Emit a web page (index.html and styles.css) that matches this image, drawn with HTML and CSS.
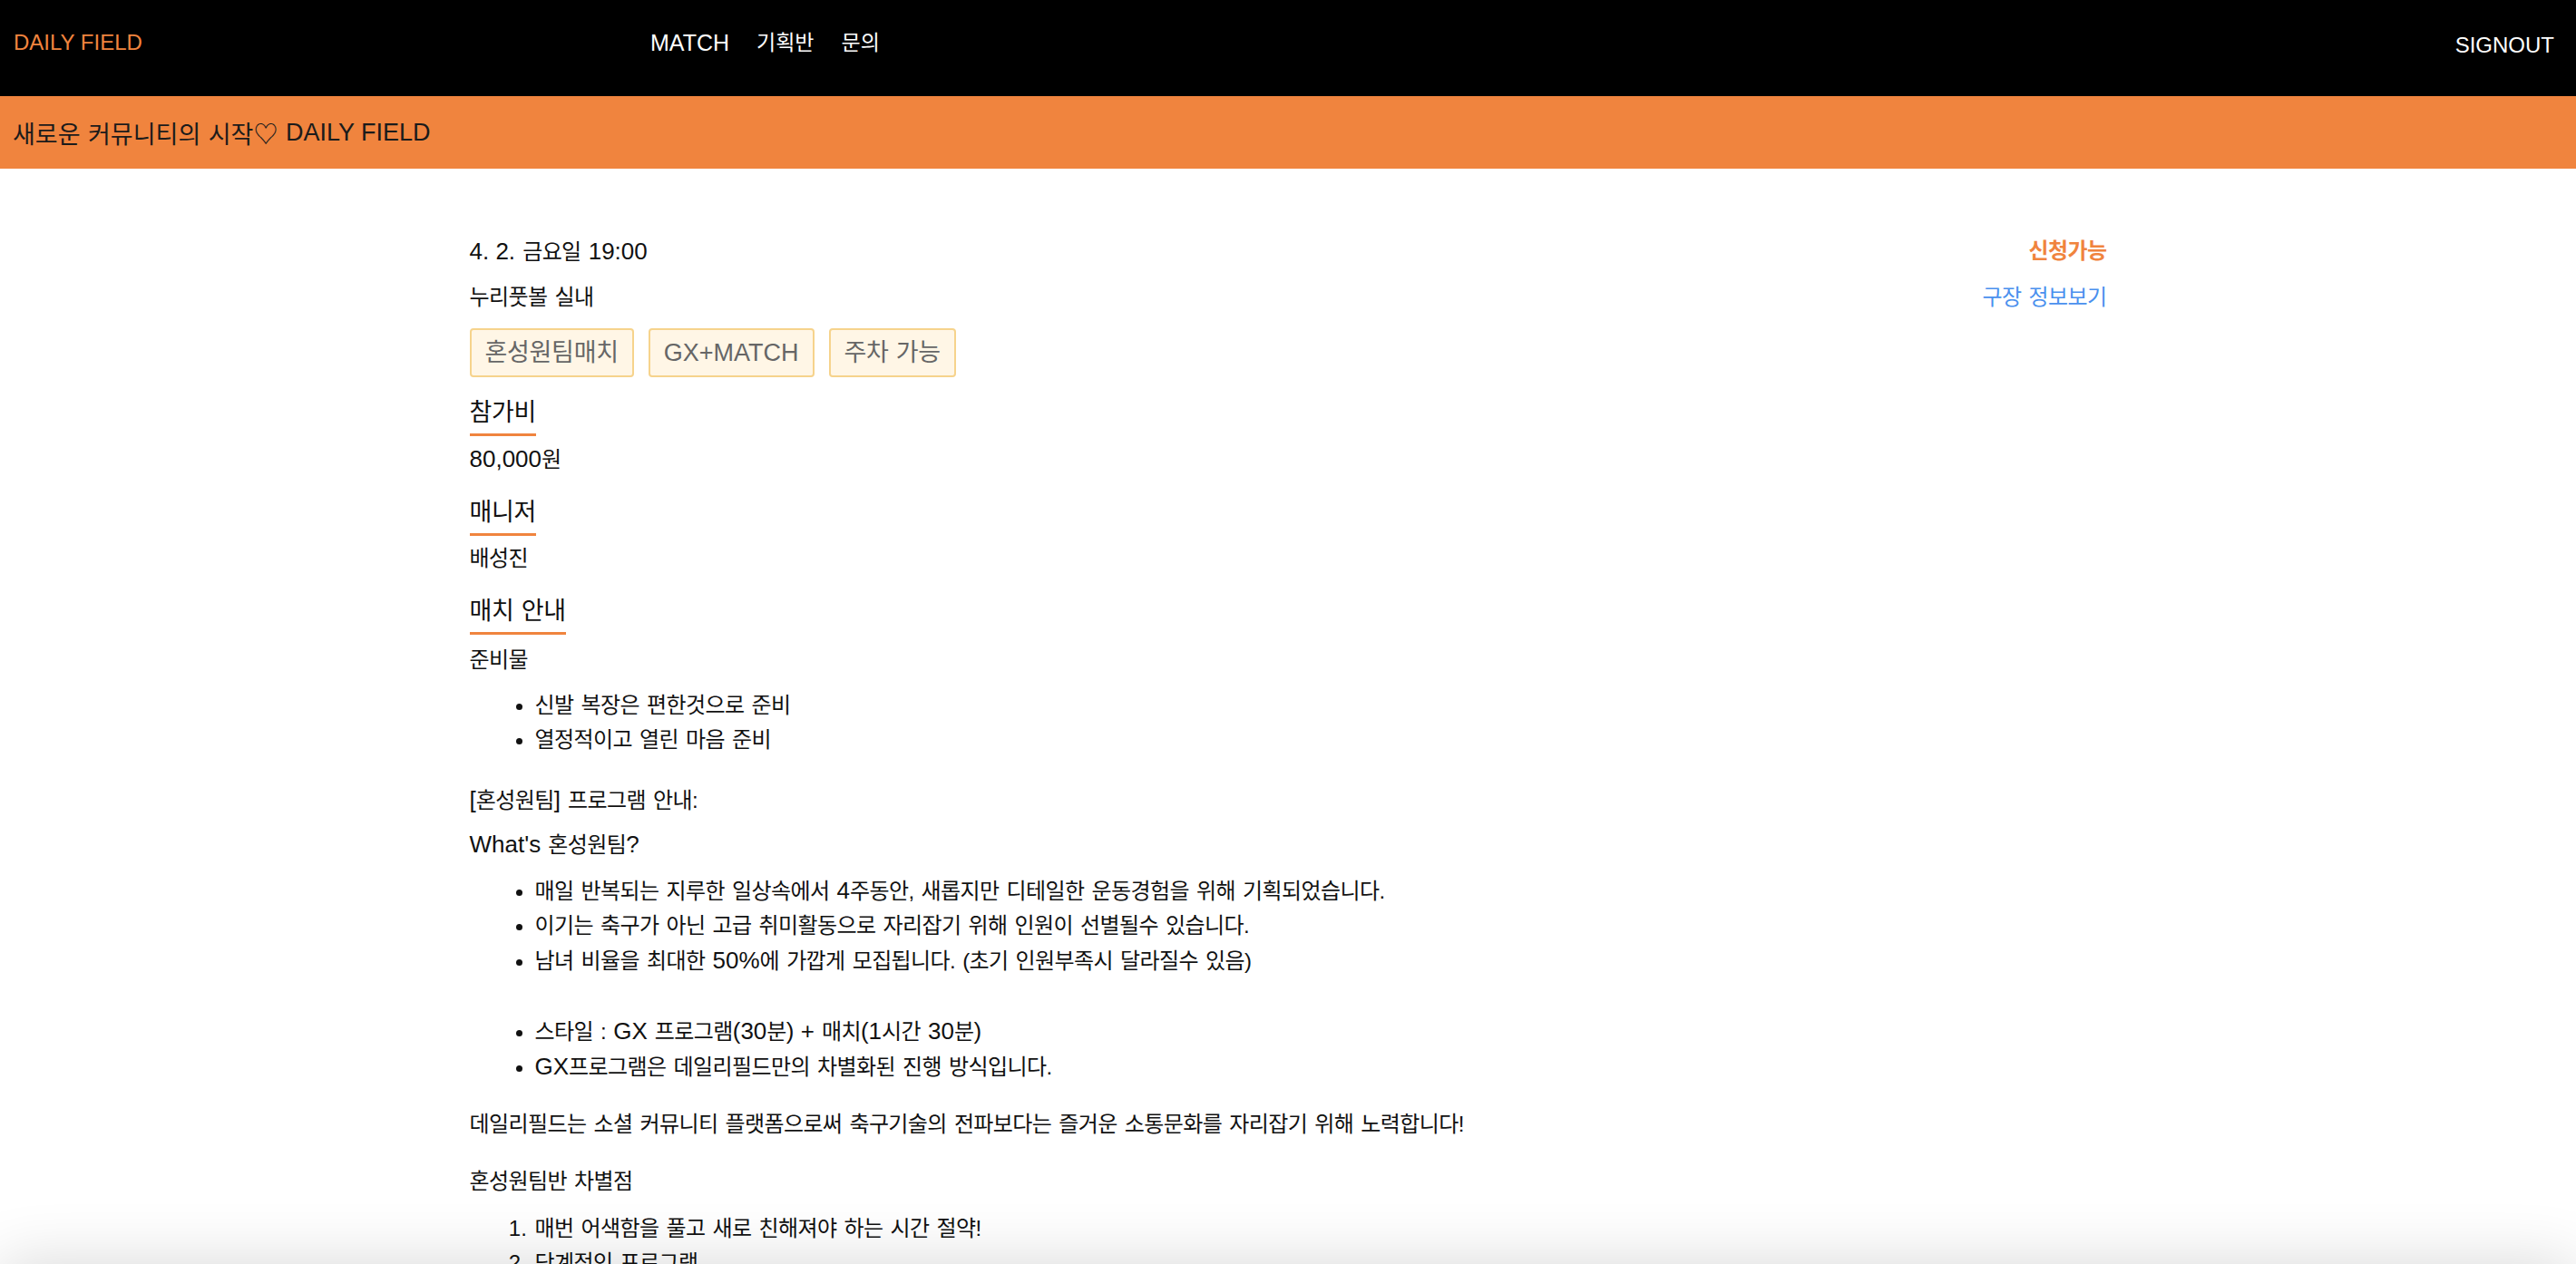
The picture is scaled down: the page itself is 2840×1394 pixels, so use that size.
FILE: index.html
```html
<!DOCTYPE html>
<html lang="ko">
<head>
<meta charset="utf-8">
<title>DAILY FIELD</title>
<link rel="stylesheet" href="styles.css">
</head>
<body>
<header class="topbar">
  <a class="logo" href="#">DAILY FIELD</a>
  <nav class="menu">
    <a class="latin" href="#">MATCH</a>
    <a href="#">기획반</a>
    <a href="#">문의</a>
  </nav>
  <a class="signout" href="#">SIGNOUT</a>
</header>
<div class="banner">새로운 커뮤니티의 시작♡ <span class="latin">DAILY FIELD</span></div>

<main class="detail">
  <div class="row">
    <span><span class="latin">4. 2.</span> 금요일 <span class="latin">19:00</span></span>
    <span class="status">신청가능</span>
  </div>
  <div class="row">
    <span>누리풋볼 실내</span>
    <a class="field-link" href="#">구장 정보보기</a>
  </div>
  <div class="tags">
    <span class="tag">혼성원팀매치</span>
    <span class="tag"><span class="latin">GX+MATCH</span></span>
    <span class="tag">주차 가능</span>
  </div>

  <h3 class="sec-title">참가비</h3>
  <p class="sec-value"><span class="latin">80,000</span>원</p>

  <h3 class="sec-title">매니저</h3>
  <p class="sec-value">배성진</p>

  <h3 class="sec-title">매치 안내</h3>
  <div class="guide">
    <p class="guide-label">준비물</p>
    <ul class="guide-list">
      <li>신발 복장은 편한것으로 준비</li>
      <li>열정적이고 열린 마음 준비</li>
    </ul>
    <p class="guide-head"><span class="latin">[</span>혼성원팀<span class="latin">]</span> 프로그램 안내:</p>
    <p class="guide-sub"><span class="latin">What's</span> 혼성원팀<span class="latin">?</span></p>
    <ul class="guide-list">
      <li>매일 반복되는 지루한 일상속에서 <span class="latin">4</span>주동안, 새롭지만 디테일한 운동경험을 위해 기획되었습니다.</li>
      <li>이기는 축구가 아닌 고급 취미활동으로 자리잡기 위해 인원이 선별될수 있습니다.</li>
      <li>남녀 비율을 최대한 <span class="latin">50%</span>에 가깝게 모집됩니다. (초기 인원부족시 달라질수 있음)</li>
      <li class="spacer"></li>
      <li>스타일 : <span class="latin">GX</span> 프로그램<span class="latin">(30</span>분<span class="latin">) +</span> 매치<span class="latin">(1</span>시간 <span class="latin">30</span>분<span class="latin">)</span></li>
      <li><span class="latin">GX</span>프로그램은 데일리필드만의 차별화된 진행 방식입니다.</li>
    </ul>
    <p class="guide-para">데일리필드는 소셜 커뮤니티 플랫폼으로써 축구기술의 전파보다는 즐거운 소통문화를 자리잡기 위해 노력합니다!</p>
    <p class="guide-para">혼성원팀반 차별점</p>
    <ol class="guide-list guide-ordered">
      <li>매번 어색함을 풀고 새로 친해져야 하는 시간 절약!</li>
      <li>단계적인 프로그램</li>
    </ol>
  </div>
</main>

<div class="dock"></div>
</body>
</html>
```

FILE: styles.css
```css
body {
  margin: 0;
  font-family: "Liberation Sans", "Noto Sans CJK KR", sans-serif;
  color: #111;
  background: #fff;
}

a {
  text-decoration: none;
}

/* top navigation */
.topbar {
  display: flex;
  align-items: flex-start;
  height: 106px;
  background: #000;
}

.logo {
  box-sizing: border-box;
  width: 717px;
  padding-left: 15px;
  margin-top: 33px;
  font-size: 24px;
  line-height: 28px;
  color: #f0843e;
}

.menu {
  display: flex;
  gap: 30px;
  margin-top: 33px;
}

.menu a {
  color: #fff;
  font-size: 23px;
  line-height: 28px;
}

.menu a.latin {
  font-size: 25px;
}

.signout {
  margin-left: auto;
  margin-right: 24px;
  margin-top: 36px;
  color: #fff;
  font-size: 24px;
  line-height: 28px;
}

/* banner */
.banner {
  display: flex;
  align-items: center;
  height: 80px;
  padding-left: 14px;
  background: #f0843e;
  color: #1b1b1b;
  font-size: 27px;
  word-spacing: 1px;
  white-space: pre;
}

.latin {
  letter-spacing: 0;
  word-spacing: 0;
}

.banner .latin {
  font-size: 27px;
}

/* detail */
.detail {
  width: 1805px;
  margin: 0 auto;
  padding-top: 72px;
  font-size: 24px;
  line-height: 38px;
  letter-spacing: -0.6px;
  word-spacing: 2px;
}

.detail .latin {
  font-size: 26px;
}

.row {
  display: flex;
  justify-content: space-between;
  align-items: center;
  height: 38px;
}

.row + .row {
  margin-top: 13px;
}

.status {
  color: #f0843e;
  font-weight: 700;
}

.field-link {
  color: #4a90ee;
}

.tags {
  display: flex;
  gap: 16px;
  margin-top: 15px;
}

.tag {
  box-sizing: border-box;
  height: 54px;
  padding: 0 15px;
  border: 2px solid #f6d38c;
  border-radius: 4px;
  background: #fff6e6;
  color: #666;
  font-size: 27px;
  line-height: 50px;
  letter-spacing: -0.3px;
  word-spacing: 1px;
}

.detail .tag .latin {
  font-size: 27px;
}

.sec-title {
  width: fit-content;
  margin: 21px 0 0;
  padding-bottom: 5px;
  border-bottom: 3px solid #f0843e;
  font-size: 27px;
  font-weight: 400;
  line-height: 36px;
  letter-spacing: -0.3px;
  word-spacing: 1px;
}

.sec-value {
  margin: 6px 0 0;
}

/* guide rich text */
.guide p {
  margin: 0;
}

.guide .guide-label {
  margin-top: 9px;
}

.guide .guide-head {
  margin-top: 28px;
}

.guide .guide-sub {
  margin-top: 10px;
}

.guide .guide-para {
  margin-top: 25px;
}

.guide-list {
  margin: 12px 0 0;
  padding-left: 72px;
}

.guide-ordered {
  margin-top: 14px;
}

.guide-list li::marker {
  letter-spacing: 0;
}

.guide-list .spacer {
  height: 39px;
  list-style: none;
}

/* fixed bottom dock lying just below the viewport, only its shadow shows */
.dock {
  position: fixed;
  left: 0;
  right: 0;
  bottom: -80px;
  height: 80px;
  background: #fff;
  box-shadow: 0 0 70px rgba(0, 0, 0, 0.16);
}
```
